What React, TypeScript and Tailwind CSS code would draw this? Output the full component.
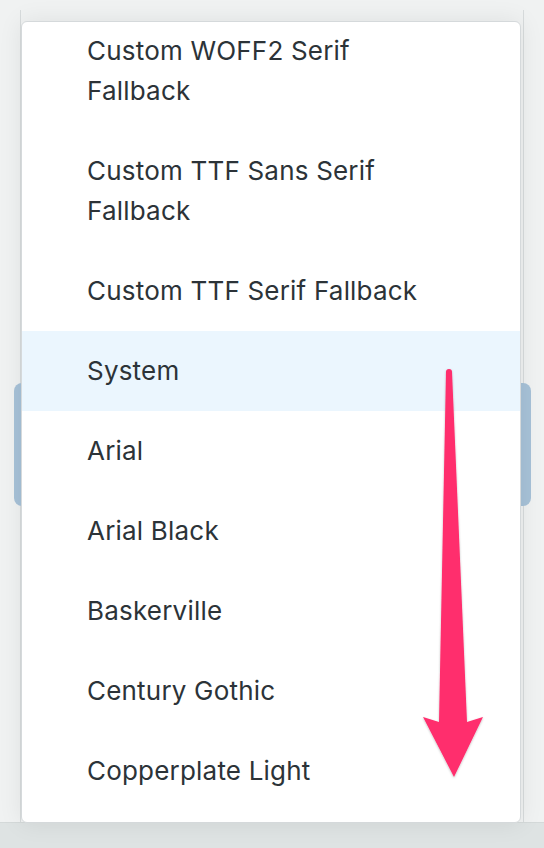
import React from 'react';

const fonts = [
  'Custom WOFF2 Serif Fallback',
  'Custom TTF Sans Serif Fallback',
  'Custom TTF Serif Fallback',
  'System',
  'Arial',
  'Arial Black',
  'Baskerville',
  'Century Gothic',
  'Copperplate Light',
];

function ArrowOverlay() {
  return (
    <svg className="pointer-events-none absolute left-0 top-0" width={544} height={848} viewBox="0 0 544 848">
      <defs>
        <filter id="sh" x="-20%" y="-5%" width="140%" height="110%">
          <feDropShadow dx="0" dy="1" stdDeviation="1" floodColor="#000" floodOpacity="0.25" />
        </filter>
      </defs>
      <g filter="url(#sh)" fill="#ff2d6d">
        <circle cx={449} cy={372} r={3} />
        <polygon points="446,372 452,372 467,722 483,717 454,777 423,717 439,722" />
      </g>
    </svg>
  );
}

export default function App() {
  return (
    <div
      className="relative h-[848px] w-[544px] overflow-hidden bg-[#f0f2f2]"
      style={{ fontFamily: 'Inter, "Noto Sans", sans-serif' }}
    >
      <div className="flex h-[823px] flex-col border-b border-[#d4d9d9] pt-[10px]">
        <div className="mx-[20px] flex flex-1 flex-col border-x border-[#d7dbdc] pt-[373px]">
          <div className="-ml-[7px] -mr-[8px] h-[123px] rounded-lg bg-[#a7c2d8]" />
        </div>
      </div>
      <div className="h-[25px] bg-[#dee3e3]" />

      <div className="absolute left-[21px] top-[21px] h-[802px] w-[500px] overflow-hidden rounded-md border border-[#d5d9db] bg-white shadow-[0_0_24px_rgba(0,0,0,0.08)]">
        <ul className="-mt-[11px]">
          {fonts.map((f) => (
            <li
              key={f}
              className={
                'py-[20px] pl-[65px] pr-[75px] text-[26px] leading-[40px] tracking-[0.2px] text-[#2c3338] ' +
                (f === 'System' ? 'bg-[#ebf6fe]' : '')
              }
            >
              {f}
            </li>
          ))}
        </ul>
      </div>

      <ArrowOverlay />
    </div>
  );
}
